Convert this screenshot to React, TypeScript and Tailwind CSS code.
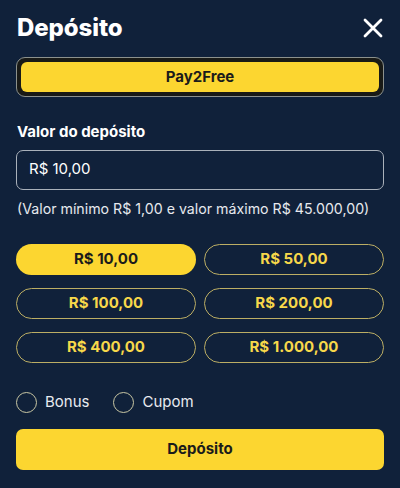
import { useState } from 'react';

const amounts = ['R$ 10,00', 'R$ 50,00', 'R$ 100,00', 'R$ 200,00', 'R$ 400,00', 'R$ 1.000,00'];

const App = () => {
  const [selected, setSelected] = useState(0);

  return (
    <div className="w-[400px] h-[488px] bg-[#10213a] text-white px-4 pt-[13px] font-['Inter',sans-serif] overflow-hidden">
      {/* Header */}
      <div className="flex items-center justify-between h-[30px]">
        <h1 className="text-[24px] font-extrabold leading-none tracking-[-0.1px] pl-[1px]">Depósito</h1>
        <svg width="20" height="20" viewBox="0 0 20 20" className="mr-[1px]">
          <path d="M2 2 L18 18 M18 2 L2 18" stroke="white" strokeWidth="2.8" strokeLinecap="round" />
        </svg>
      </div>

      {/* Payment method */}
      <div className="mt-[14px] h-[40px] rounded-[9px] border border-[#8c918c] bg-[#191a16] p-[4px]">
        <div className="h-full rounded-[6px] bg-[#fcd630] flex items-center justify-center text-[15px] font-bold text-[#1b1b1b]">
          Pay2Free
        </div>
      </div>

      {/* Amount */}
      <div className="mt-[24px] text-[15px] font-bold pl-[1px]">Valor do depósito</div>
      <div className="mt-[6px] h-[40px] rounded-[7px] border border-[#aab1ba] flex items-center px-3 text-[15px]">
        R$ 10,00
      </div>
      <div className="mt-[8px] text-[14.2px] text-[#e6e9ee] pl-[1px]">
        (Valor mínimo R$ 1,00 e valor máximo R$ 45.000,00)
      </div>

      {/* Quick amounts */}
      <div className="mt-[25px] grid grid-cols-2 gap-x-[8px] gap-y-[13px]">
        {amounts.map((a, i) => (
          <button
            key={a}
            onClick={() => setSelected(i)}
            className={
              i === selected
                ? 'h-[31px] rounded-full bg-[#fcd630] text-[#1b1b1b] text-[15px] font-bold'
                : 'h-[31px] rounded-full border border-[#bcae64] text-[#f7d84a] text-[15px] font-bold'
            }
          >
            {a}
          </button>
        ))}
      </div>

      {/* Options */}
      <div className="mt-[29px] flex items-center h-[21px]">
        <span className="w-[21px] h-[21px] rounded-full border border-[#c9c7a4]" />
        <span className="ml-[8px] text-[15px] text-[#e8ebf0]">Bonus</span>
        <span className="ml-[24px] w-[21px] h-[21px] rounded-full border border-[#c9c7a4]" />
        <span className="ml-[8px] text-[15px] text-[#e8ebf0]">Cupom</span>
      </div>

      <button className="mt-[16px] w-full h-[41px] rounded-[7px] bg-[#fcd630] text-[#1b1b1b] text-[15px] font-bold">
        Depósito
      </button>
    </div>
  );
};

export default App;
